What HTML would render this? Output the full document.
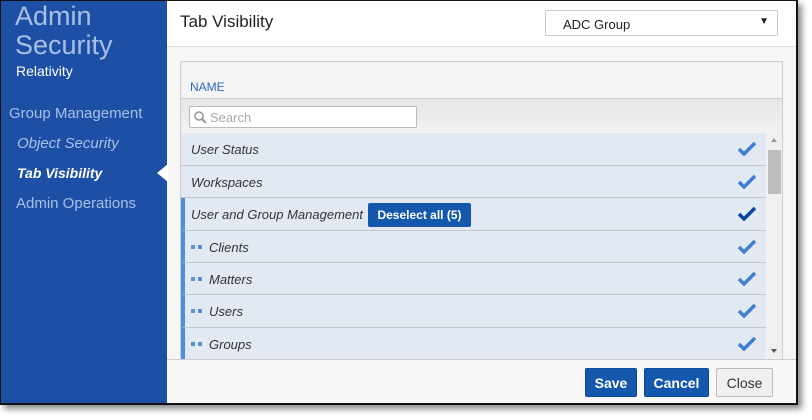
<!DOCTYPE html>
<html><head><style>
*{box-sizing:border-box;margin:0;padding:0}
body{width:812px;height:420px;background:#fff;font-family:"Liberation Sans",sans-serif;position:relative;overflow:hidden}
.win{position:absolute;left:0;top:0;width:798px;height:405px;border:2px solid #111;border-top:1px solid #111;border-left:1px solid #111;box-shadow:4px 4px 6px rgba(0,0,0,.45);background:#f6f6f6;overflow:hidden}
.side{position:absolute;left:0;top:0;width:166px;height:404px;background:#1d4fa5;color:#fff}
.t1{position:absolute;left:14px;top:1px;font-size:27px;color:#a8c0e8;line-height:29px}
.rel{position:absolute;left:15px;top:62px;font-size:14px}
.nav{position:absolute;font-size:15px;color:#a8c0e8}
.arrow{position:absolute;left:156px;top:163px;width:0;height:0;border-top:9px solid transparent;border-bottom:9px solid transparent;border-right:11px solid #fff}
.hdr{position:absolute;left:166px;top:0;right:0;height:46px;background:#fff;border-bottom:1px solid #ddd}
.hdr h1{position:absolute;left:13px;top:11px;font-size:17px;font-weight:normal;color:#222}
.sel{position:absolute;left:378px;top:9px;width:233px;height:26px;border:1px solid #ccc;border-radius:2px;font-size:13px;padding:6px 0 0 17px;color:#222}
.sel span{position:absolute;right:8px;top:5px;font-size:10px}
.tbl{position:absolute;left:179px;top:60px;width:603px;height:299px;border:1px solid #ccc;border-bottom:none;background:#f4f4f4}
.name{position:absolute;left:9px;top:18px;font-size:12px;color:#2a6bbf}
.srow{position:absolute;left:0;top:36px;width:601px;height:35px;background:linear-gradient(#e6e6e6,#f2f2f2);border-top:1px solid #ccc}
.search{position:absolute;left:8px;top:7px;width:228px;height:22px;background:#fff;border:1px solid #bbb;border-radius:2px;font-size:13px;color:#aaa;padding:3px 0 0 20px}
.row{position:absolute;left:0;width:585px;height:32px;background:#e3e9f3;border-bottom:1px solid #c4c8cc;font-size:13px;font-style:italic;color:#333;padding:9px 0 0 10px}
.bar{border-left:4px solid #4a8fe0;padding-left:6px}
.dots{display:inline-block;width:13px;height:4px;margin-right:5px;vertical-align:3px;background:linear-gradient(90deg,#5a8fd6 0 4px,transparent 4px 7px,#5a8fd6 7px 11px,transparent 11px)}
.chk{position:absolute;right:10px;top:8px}
.desel{position:absolute;left:183px;top:5px;width:103px;height:24px;background:#1458ae;border-radius:2px;color:#fff;font-style:normal;font-weight:bold;font-size:12px;text-align:center;line-height:24px}
.sb{position:absolute;left:586px;top:71px;width:15px;height:228px;background:#f0f0f0}
.thumb{position:absolute;left:1px;top:17px;width:13px;height:44px;background:#bdbdbd}
.foot{position:absolute;left:166px;top:358px;right:0;height:46px;background:#f8f8f8;border-top:1px solid #ccc}
.btn{position:absolute;top:8px;height:29px;border-radius:2px;font-size:14px;font-weight:bold;text-align:center;line-height:28px;color:#fff;background:#1458ae;border:1px solid #0d4a96}
</style></head><body>
<div class="win">
<div class="side">
<div class="t1">Admin<br>Security</div>
<div class="rel">Relativity</div>
<div class="nav" style="left:8px;top:104px">Group Management</div>
<div class="nav" style="left:16px;top:134px;font-style:italic">Object Security</div>
<div class="nav" style="left:16px;top:164px;font-style:italic;color:#fff;font-weight:bold;font-size:14px">Tab Visibility</div>
<div class="nav" style="left:15px;top:194px">Admin Operations</div>
<div class="arrow"></div>
</div>
<div class="hdr"><h1>Tab Visibility</h1><div class="sel">ADC Group<span>▼</span></div></div>
<div class="tbl">
<div class="name">NAME</div>
<div class="srow"><div class="search"><svg style="position:absolute;left:4px;top:4px" width="13" height="13" viewBox="0 0 13 13"><circle cx="5" cy="5" r="4" fill="none" stroke="#999" stroke-width="1.6"/><path d="M8 8l4 4" stroke="#999" stroke-width="2"/></svg>Search</div></div>
<div class="row" style="top:71px;height:33px">User Status<svg class="chk" width="18" height="15" viewBox="0 0 18 15"><path d="M1 8l5 5L17 2" fill="none" stroke="#3d7fd0" stroke-width="3.5"/></svg></div>
<div class="row" style="top:104px">Workspaces<svg class="chk" width="18" height="15" viewBox="0 0 18 15"><path d="M1 8l5 5L17 2" fill="none" stroke="#3d7fd0" stroke-width="3.5"/></svg></div>
<div class="row bar" style="top:136px;height:33px">User and Group Management<div class="desel">Deselect all (5)</div><svg class="chk" width="18" height="15" viewBox="0 0 18 15"><path d="M1 8l5 5L17 2" fill="none" stroke="#0a47a0" stroke-width="3.5"/></svg></div>
<div class="row bar" style="top:169px"><span class="dots"></span>Clients<svg class="chk" width="18" height="15" viewBox="0 0 18 15"><path d="M1 8l5 5L17 2" fill="none" stroke="#3d7fd0" stroke-width="3.5"/></svg></div>
<div class="row bar" style="top:201px"><span class="dots"></span>Matters<svg class="chk" width="18" height="15" viewBox="0 0 18 15"><path d="M1 8l5 5L17 2" fill="none" stroke="#3d7fd0" stroke-width="3.5"/></svg></div>
<div class="row bar" style="top:233px;height:33px"><span class="dots"></span>Users<svg class="chk" width="18" height="15" viewBox="0 0 18 15"><path d="M1 8l5 5L17 2" fill="none" stroke="#3d7fd0" stroke-width="3.5"/></svg></div>
<div class="row bar" style="top:266px"><span class="dots"></span>Groups<svg class="chk" width="18" height="15" viewBox="0 0 18 15"><path d="M1 8l5 5L17 2" fill="none" stroke="#3d7fd0" stroke-width="3.5"/></svg></div>
<div class="sb"><div style="position:absolute;left:4px;top:5px;border-left:3px solid transparent;border-right:3px solid transparent;border-bottom:4px solid #999"></div><div class="thumb"></div><div style="position:absolute;left:4px;top:216px;border-left:3px solid transparent;border-right:3px solid transparent;border-top:4px solid #555"></div></div>
</div>
<div class="foot">
<div class="btn" style="left:418px;width:52px">Save</div>
<div class="btn" style="left:477px;width:65px">Cancel</div>
<div class="btn" style="left:549px;width:57px;background:#f0f0f0;border:1px solid #bbb;color:#333;font-weight:normal">Close</div>
</div>
</div>
</body></html>
